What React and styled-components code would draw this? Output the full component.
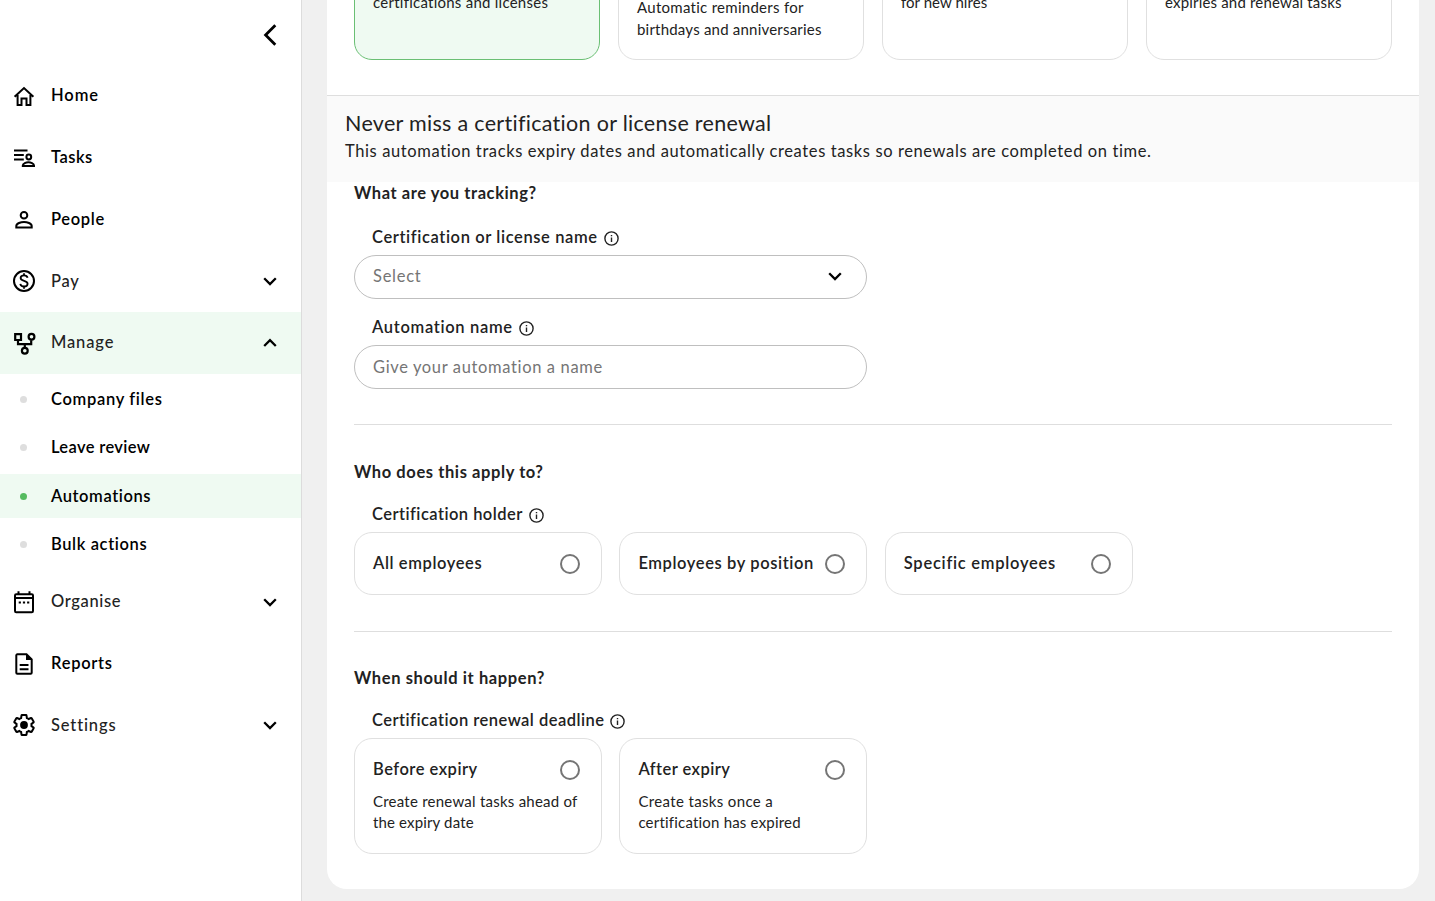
import React from "react";
import styled, { createGlobalStyle } from "styled-components";

const GlobalStyle = createGlobalStyle`
  *, *::before, *::after { box-sizing: border-box; }
  html, body, #root { height: 100%; }
  body {
    margin: 0;
    overflow: hidden;
    background: #f0f0f0;
    color: #222;
    font-family: Lato, "Liberation Sans", sans-serif;
    font-size: 16.5px;
    font-variant-ligatures: none;
  }
`;

/* ---------- layout ---------- */

const Shell = styled.div`
  display: flex;
  height: 100vh;
  overflow: hidden;
`;

const Sidebar = styled.nav`
  flex: 0 0 302px;
  background: #fff;
  border-right: 1px solid #dcdcdc;
`;

const SidebarHeader = styled.div`
  display: flex;
  justify-content: flex-end;
  height: 65px;
  padding: 23px 24px 0 0;
`;

const Main = styled.main`
  flex: 1;
  padding: 0 16px 0 25px;
`;

const Panel = styled.section`
  margin-top: -60px;
  height: 949px;
  background: #fff;
  border-radius: 20px;
`;

/* ---------- sidebar ---------- */

const NavRow = styled.a`
  display: grid;
  grid-template-columns: 24px 1fr 14px;
  column-gap: 15px;
  align-items: center;
  height: 61.75px;
  padding: 0 24px 0 12px;
  color: ${(p) => (p.$group ? "#222" : "#000")};
  background: ${(p) => (p.$active ? "#effaf2" : "transparent")};
`;

const NavLabel = styled.span`
  font-weight: ${(p) => (p.$group ? 500 : 600)};
  line-height: 22px;
  letter-spacing: ${(p) => p.$track}px;
  white-space: nowrap;
  margin-top: -1px;
`;

const SubNav = styled.div`
  display: flex;
  flex-direction: column;
  gap: 4.4px;
  padding: 3.6px 0 4.4px;
`;

const SubRow = styled.a`
  display: flex;
  align-items: center;
  height: 44px;
  padding-left: 20px;
  gap: 24px;
  color: #000;
  background: ${(p) => (p.$active ? "#effaf2" : "transparent")};
`;

const Dot = styled.i`
  width: 7px;
  height: 7px;
  border-radius: 50%;
  background: ${(p) => (p.$active ? "#55bb60" : "#dedede")};
`;

/* ---------- templates ---------- */

const TemplateRow = styled.div`
  display: grid;
  grid-template-columns: repeat(4, 246px);
  gap: 18px;
  padding: 0 27px 35px;
`;

const TemplateCard = styled.article`
  height: 120px;
  padding: ${(p) => (p.$tall ? 55 : 50)}px 0 0 18px;
  border: 1px solid ${(p) => (p.$selected ? "#6abf74" : "#e0e0e0")};
  border-radius: 18px;
  background: ${(p) => (p.$selected ? "#effaf2" : "#fff")};
`;

const Line = styled.div`
  font-size: 15px;
  line-height: ${(p) => p.$height || 22}px;
  letter-spacing: ${(p) => p.$track}px;
  white-space: nowrap;
`;

const Banner = styled.header`
  height: 87px;
  padding: 15px 18px 0;
  border-top: 1px solid #dedede;
  background: #fafafa;
`;

const BannerTitle = styled.h1`
  margin: 0;
  font-size: 21.5px;
  font-weight: 400;
  line-height: 25px;
  letter-spacing: 0.3px;
`;

const BannerText = styled.p`
  margin: 0;
  line-height: 30px;
  letter-spacing: 0.61px;
`;

/* ---------- form ---------- */

const Form = styled.div`
  padding: 0 27px;
`;

const FormSection = styled.section`
  padding-top: ${(p) => p.$top}px;
  padding-bottom: ${(p) => p.$bottom}px;
  border-bottom: ${(p) => (p.$last ? "none" : "1px solid #dedede")};
`;

const SectionTitle = styled.h2`
  margin: 0 0 ${(p) => p.$gap}px;
  font-size: 16.5px;
  font-weight: 700;
  line-height: 22px;
  letter-spacing: ${(p) => p.$track}px;
`;

const Field = styled.div`
  & + & {
    margin-top: 18px;
  }
`;

const Label = styled.div`
  display: flex;
  align-items: center;
  gap: 6px;
  height: 22px;
  margin-bottom: 6px;
  padding-left: 18px;
  font-weight: 600;
  letter-spacing: ${(p) => p.$track}px;
`;

const LabelText = styled.span`
  margin-top: -2px;
`;

const Control = styled.div`
  display: flex;
  align-items: center;
  justify-content: space-between;
  width: 513px;
  height: 44px;
  padding: ${(p) => (p.$select ? "0 24px 2px 18px" : "0 24px 0 18px")};
  border: 1px solid #bfbfbf;
  border-radius: 22px;
  color: #757575;
  letter-spacing: ${(p) => p.$track}px;
`;

const Options = styled.div`
  display: flex;
  gap: 17.4px;
`;

const OptionCard = styled.div`
  width: 248px;
  height: ${(p) => (p.$described ? 116 : 63)}px;
  padding: 20px 21px 0 18px;
  border: 1px solid #e0e0e0;
  border-radius: 18px;
`;

const OptionHead = styled.div`
  display: flex;
  align-items: center;
  justify-content: space-between;
  height: 22px;
  margin-bottom: 10px;
`;

const OptionName = styled.span`
  font-weight: 600;
  letter-spacing: ${(p) => p.$track}px;
  line-height: 22px;
  margin-top: -2px;
  white-space: nowrap;
`;

const Radio = styled.span`
  flex: none;
  width: 20px;
  height: 20px;
  border: 2px solid #757575;
  border-radius: 50%;
`;

/* ---------- icons ---------- */

const Svg = styled.svg`
  display: block;
  flex: none;
  fill: none;
  stroke: ${(p) => p.$color || "#000"};
  stroke-width: ${(p) => p.$weight || 2};
`;

const Icon = ({ children, size = 24, ...rest }) => (
  <Svg width={size} height={size} viewBox="0 0 24 24" {...rest}>
    {children}
  </Svg>
);

const GEAR =
  "M19.43 12.98c.04-.32.07-.64.07-.98 0-.34-.03-.66-.07-.98l2.11-1.65c.19-.15.24-.42.12-.64l-2-3.46c-.09-.16-.26-.25-.44-.25-.06 0-.12.01-.17.03l-2.49 1c-.52-.4-1.08-.73-1.69-.98l-.38-2.65C14.46 2.18 14.25 2 14 2h-4c-.25 0-.46.18-.49.42l-.38 2.65c-.61.25-1.17.59-1.69.98l-2.49-1c-.06-.02-.12-.03-.18-.03-.17 0-.34.09-.43.25l-2 3.46c-.13.22-.07.49.12.64l2.11 1.65c-.04.32-.07.65-.07.98 0 .33.03.66.07.98l-2.11 1.65c-.19.15-.24.42-.12.64l2 3.46c.09.16.26.25.44.25.06 0 .12-.01.17-.03l2.49-1c.52.4 1.08.73 1.69.98l.38 2.65c.03.24.24.42.49.42h4c.25 0 .46-.18.49-.42l.38-2.65c.61-.25 1.17-.59 1.69-.98l2.49 1c.06.02.12.03.18.03.17 0 .34-.09.43-.25l2-3.46c.12-.22.07-.49-.12-.64l-2.11-1.65z";

const icons = {
  home: (
    <Icon>
      <path d="M2.6 12.8 12 4 21.4 12.8M5.6 11v10h3.9v-6.6h5V21h3.9V11" />
    </Icon>
  ),
  tasks: (
    <Icon>
      <path d="M2 4.4h13.5M2 9h9.8M2 13.6h9.8" />
      <circle cx="16.8" cy="11" r="2.4" />
      <path d="M10.8 20v-.6c0-2 3.4-3.2 5.6-3.2s5.6 1.2 5.6 3.2v.6z" />
    </Icon>
  ),
  people: (
    <Icon>
      <circle cx="12" cy="8.3" r="3.3" />
      <path d="M4.3 20.6V19c0-2.6 4.6-4 7.7-4s7.7 1.4 7.7 4v1.6z" />
    </Icon>
  ),
  pay: (
    <Icon>
      <circle cx="12" cy="12" r="10" />
      <path
        strokeWidth="1.8"
        d="M15.6 8.800C15.200 7.200 13.800 6.400 12 6.400c-2 0-3.400 1-3.400 2.600 0 3.700 7 2 7 5.700 0 1.800-1.500 2.800-3.500 2.800s-3.500-1-3.800-2.700M12 4.300v2.400M12 17.300v2.400"
      />
    </Icon>
  ),
  manage: (
    <Icon $weight={2.2}>
      <path d="M3.200 3.200h5.800v5.800H3.200zM6 9v4.200h13.200V9.200M12.800 13.200v3.400" />
      <circle cx="19.500" cy="5.800" r="2.900" />
      <circle cx="12.800" cy="19.700" r="2.900" />
    </Icon>
  ),
  organise: (
    <Icon>
      <rect x="3" y="4.300" width="18" height="18" rx="1.200" />
      <path d="M6.500 1.300v3M17.500 1.300v3M3 8h18" />
      <path d="M6.700 12.400h2.200M10.900 12.400h2.200M15.100 12.400h2.200" />
    </Icon>
  ),
  reports: (
    <Icon>
      <path d="M14.500 2.300H5.300a1 1 0 0 0-1 1v17.400a1 1 0 0 0 1 1h13.400a1 1 0 0 0 1-1V7.500z" />
      <path d="M14 2v6h6z" fill="#000" stroke="none" />
      <path d="M7.700 13h8.800M7.700 17.300h8.800" />
    </Icon>
  ),
  settings: (
    <Icon>
      <path d={GEAR} />
      <circle cx="12" cy="12" r="3.900" fill="#000" stroke="none" />
    </Icon>
  ),
};

const Chevron = ({ up }) => (
  <Svg width="14" height="14" viewBox="0 0 14 14" $weight={2.3}>
    <path d={up ? "M1.200 10 7 4.200 12.800 10" : "M1.200 4.200 7 10 12.800 4.200"} />
  </Svg>
);

const CollapseIcon = () => (
  <Svg width="14" height="24" viewBox="0 0 14 24" $weight={2.8}>
    <path d="M12.300 2.300 2.600 12l9.700 9.700" />
  </Svg>
);

const InfoIcon = () => (
  <Svg width="15" height="15" viewBox="0 0 15 15" $color="#222" $weight={1.4}>
    <circle cx="7.500" cy="7.500" r="6.600" />
    <path d="M7.500 6.500v4.600M7.500 3.900v1.400" />
  </Svg>
);

/* ---------- data ---------- */

const topNav = [
  { icon: "home", text: "Home", track: 0.9 },
  { icon: "tasks", text: "Tasks", track: 0.5 },
  { icon: "people", text: "People", track: 0.66 },
  { icon: "pay", text: "Pay", track: 0.7, group: true },
  { icon: "manage", text: "Manage", track: 0.86, group: true, open: true },
];

const manageNav = [
  { text: "Company files", track: 0.68 },
  { text: "Leave review", track: 0.36 },
  { text: "Automations", track: 0.58, active: true },
  { text: "Bulk actions", track: 0.62 },
];

const bottomNav = [
  { icon: "organise", text: "Organise", track: 0.66, group: true },
  { icon: "reports", text: "Reports", track: 0.72 },
  { icon: "settings", text: "Settings", track: 0.86, group: true },
];

const templates = [
  { lines: [["certifications and licenses", 0.25]], selected: true },
  { lines: [["Automatic reminders for", 0.28], ["birthdays and anniversaries", 0.21]], tall: true },
  { lines: [["for new hires", 0.05]] },
  { lines: [["expiries and renewal tasks", 0.18]] },
];

const holders = [
  { name: "All employees", track: 0.6 },
  { name: "Employees by position", track: 0.6 },
  { name: "Specific employees", track: 0.74 },
];

const deadlines = [
  {
    name: "Before expiry",
    track: 0.5,
    lines: [["Create renewal tasks ahead of", 0.24], ["the expiry date", 0.15]],
  },
  {
    name: "After expiry",
    track: 0.45,
    lines: [["Create tasks once a", 0.36], ["certification has expired", 0.2]],
  },
];

const NavItem = ({ icon, text, track, group, open }) => (
  <NavRow $group={group} $active={open}>
    {icons[icon]}
    <NavLabel $group={group} $track={track}>{text}</NavLabel>
    {group && <Chevron up={open} />}
  </NavRow>
);

const FieldLabel = ({ text, track }) => (
  <Label $track={track}>
    <LabelText>{text}</LabelText>
    <InfoIcon />
  </Label>
);

const Option = ({ name, track, lines }) => (
  <OptionCard $described={Boolean(lines)}>
    <OptionHead>
      <OptionName $track={track}>{name}</OptionName>
      <Radio />
    </OptionHead>
    {lines && lines.map(([t, k]) => <Line key={t} $track={k} $height={21}>{t}</Line>)}
  </OptionCard>
);

export default function App() {
  return (
    <Shell>
      <GlobalStyle />
      <Sidebar>
        <SidebarHeader>
          <CollapseIcon />
        </SidebarHeader>
        {topNav.map((n) => <NavItem key={n.text} {...n} />)}
        <SubNav>
          {manageNav.map((n) => (
            <SubRow key={n.text} $active={n.active}>
              <Dot $active={n.active} />
              <NavLabel $track={n.track}>{n.text}</NavLabel>
            </SubRow>
          ))}
        </SubNav>
        {bottomNav.map((n) => <NavItem key={n.text} {...n} />)}
      </Sidebar>

      <Main>
        <Panel>
          <TemplateRow>
            {templates.map((c) => (
              <TemplateCard key={c.lines[0][0]} $selected={c.selected} $tall={c.tall}>
                {c.lines.map(([t, k]) => <Line key={t} $track={k}>{t}</Line>)}
              </TemplateCard>
            ))}
          </TemplateRow>

          <Banner>
            <BannerTitle>Never miss a certification or license renewal</BannerTitle>
            <BannerText>
              This automation tracks expiry dates and automatically creates tasks so renewals are completed on time.
            </BannerText>
          </Banner>

          <Form>
            <FormSection $top={0} $bottom={35}>
              <SectionTitle $gap={23} $track={0.575}>What are you tracking?</SectionTitle>
              <Field>
                <FieldLabel text="Certification or license name" track={0.61} />
                <Control $select $track={0.74}>
                  <span>Select</span>
                  <Chevron />
                </Control>
              </Field>
              <Field>
                <FieldLabel text="Automation name" track={0.68} />
                <Control $track={0.64}>
                  <span>Give your automation a name</span>
                </Control>
              </Field>
            </FormSection>

            <FormSection $top={36} $bottom={36}>
              <SectionTitle $gap={21} $track={0.59}>Who does this apply to?</SectionTitle>
              <Field>
                <FieldLabel text="Certification holder" track={0.46} />
                <Options>{holders.map((o) => <Option key={o.name} {...o} />)}</Options>
              </Field>
            </FormSection>

            <FormSection $top={35} $bottom={35} $last>
              <SectionTitle $gap={21} $track={0.61}>When should it happen?</SectionTitle>
              <Field>
                <FieldLabel text="Certification renewal deadline" track={0.47} />
                <Options>{deadlines.map((o) => <Option key={o.name} {...o} />)}</Options>
              </Field>
            </FormSection>
          </Form>
        </Panel>
      </Main>
    </Shell>
  );
}
